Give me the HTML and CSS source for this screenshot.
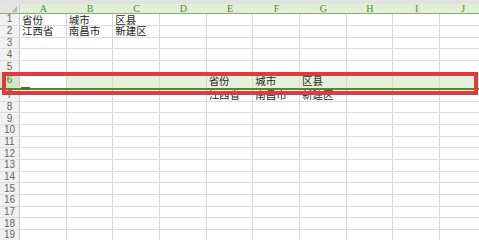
FILE: index.html
```html
<!DOCTYPE html>
<html lang="zh">
<head>
<meta charset="utf-8">
<link rel="stylesheet" href="styles.css">
</head>
<body>
<div class="sheet">
  <div class="topbar"></div>
  <div class="row head">
    <div class="rh corner"><span class="tri"></span></div>
    <div class="cells">
      <div class="cell">A</div><div class="cell">B</div><div class="cell">C</div><div class="cell">D</div><div class="cell">E</div>
      <div class="cell">F</div><div class="cell">G</div><div class="cell">H</div><div class="cell">I</div><div class="cell">J</div>
    </div>
  </div>
  <div class="row top"><div class="rh">1</div><div class="cells"><div class="cell">省份</div><div class="cell">城市</div><div class="cell">区县</div></div></div>
  <div class="row top"><div class="rh">2</div><div class="cells"><div class="cell">江西省</div><div class="cell">南昌市</div><div class="cell">新建区</div></div></div>
  <div class="row top"><div class="rh">3</div><div class="cells"></div></div>
  <div class="row top"><div class="rh">4</div><div class="cells"></div></div>
  <div class="row top"><div class="rh">5</div><div class="cells"></div></div>
  <div class="row sel"><div class="rh">6</div><div class="cells"><div class="cell active"><span class="handle"></span></div><div class="cell"></div><div class="cell"></div><div class="cell"></div><div class="cell">省份</div><div class="cell">城市</div><div class="cell">区县</div></div></div>
  <div class="row"><div class="rh">7</div><div class="cells"><div class="cell"></div><div class="cell"></div><div class="cell"></div><div class="cell"></div><div class="cell">江西省</div><div class="cell">南昌市</div><div class="cell">新建区</div></div></div>
  <div class="row"><div class="rh">8</div><div class="cells"></div></div>
  <div class="row"><div class="rh">9</div><div class="cells"></div></div>
  <div class="row"><div class="rh">10</div><div class="cells"></div></div>
  <div class="row"><div class="rh">11</div><div class="cells"></div></div>
  <div class="row"><div class="rh">12</div><div class="cells"></div></div>
  <div class="row"><div class="rh">13</div><div class="cells"></div></div>
  <div class="row"><div class="rh">14</div><div class="cells"></div></div>
  <div class="row"><div class="rh">15</div><div class="cells"></div></div>
  <div class="row"><div class="rh">16</div><div class="cells"></div></div>
  <div class="row"><div class="rh">17</div><div class="cells"></div></div>
  <div class="row"><div class="rh">18</div><div class="cells"></div></div>
  <div class="row"><div class="rh">19</div><div class="cells"></div></div>
  <div class="mark"></div>
</div>
</body>
</html>
```
FILE: styles.css
```css
* { box-sizing: border-box; margin: 0; padding: 0; }
html, body { width: 479px; height: 240px; overflow: hidden; background: #fff; }
.sheet {
  position: relative;
  width: 479px;
  height: 240px;
  overflow: hidden;
  font-family: "Noto Sans CJK SC", "Noto Sans", sans-serif;
}
.topbar { height: 4px; background: #e2e2e2; }
.row {
  display: flex;
  height: 11.67px;
  border-bottom: 1px solid #dcdcdc;
}
.row.top { height: 11.8px; }
.rh {
  flex: 0 0 20px;
  display: flex;
  align-items: center;
  justify-content: center;
  background: #f1f1f1;
  border-right: 1px solid #c8c8c8;
  font: 10px/1 "Liberation Sans", sans-serif;
  color: #666;
}
.cells {
  flex: 1 0 auto;
  display: flex;
  background: repeating-linear-gradient(to right, transparent 0 45.67px, #d6d6d6 45.67px 46.67px);
}
.cell {
  flex: 0 0 46.67px;
  padding-left: 2px;
  padding-top: 0.5px;
  font-size: 10.5px;
  line-height: 10px;
  color: #1e1e1e;
  white-space: nowrap;
}
.row.head {
  height: 10px;
  background: #e3eed9;
  border-bottom: 1px solid #7fb35e;
}
.head .cells { background: none; }
.head .cell {
  padding: 0;
  text-align: center;
  font: 10px/9px "Liberation Serif", serif;
  color: #4f8e2c;
}
.rh.corner {
  position: relative;
  background: #e4e4e4;
  border-right: 1px solid #cfcfcf;
}
.tri {
  position: absolute;
  right: 2px;
  bottom: 1px;
  width: 0;
  height: 0;
  border-left: 5px solid transparent;
  border-bottom: 6px solid #b5b5b5;
}
.row.sel {
  height: 17px;
  border-bottom: 2px solid #4f8a2c;
}
.sel .rh { background: #d3e6c2; color: #4f8e2c; }
.sel .cells {
  background: repeating-linear-gradient(to right, transparent 0 45.67px, #d2dfc6 45.67px 46.67px), #e5f1da;
}
.sel .cell { padding-top: 3px; }
.cell.active {
  position: relative;
  background: linear-gradient(to right, #fff 0 45.67px, transparent 45.67px);
}
.handle {
  position: absolute;
  left: 1px;
  bottom: -2px;
  width: 9px;
  height: 3px;
  background: #3f7a22;
}
.mark {
  position: absolute;
  left: 2px;
  top: 71.5px;
  width: 476px;
  height: 23px;
  border: 4px solid #e4393c;
}
```
